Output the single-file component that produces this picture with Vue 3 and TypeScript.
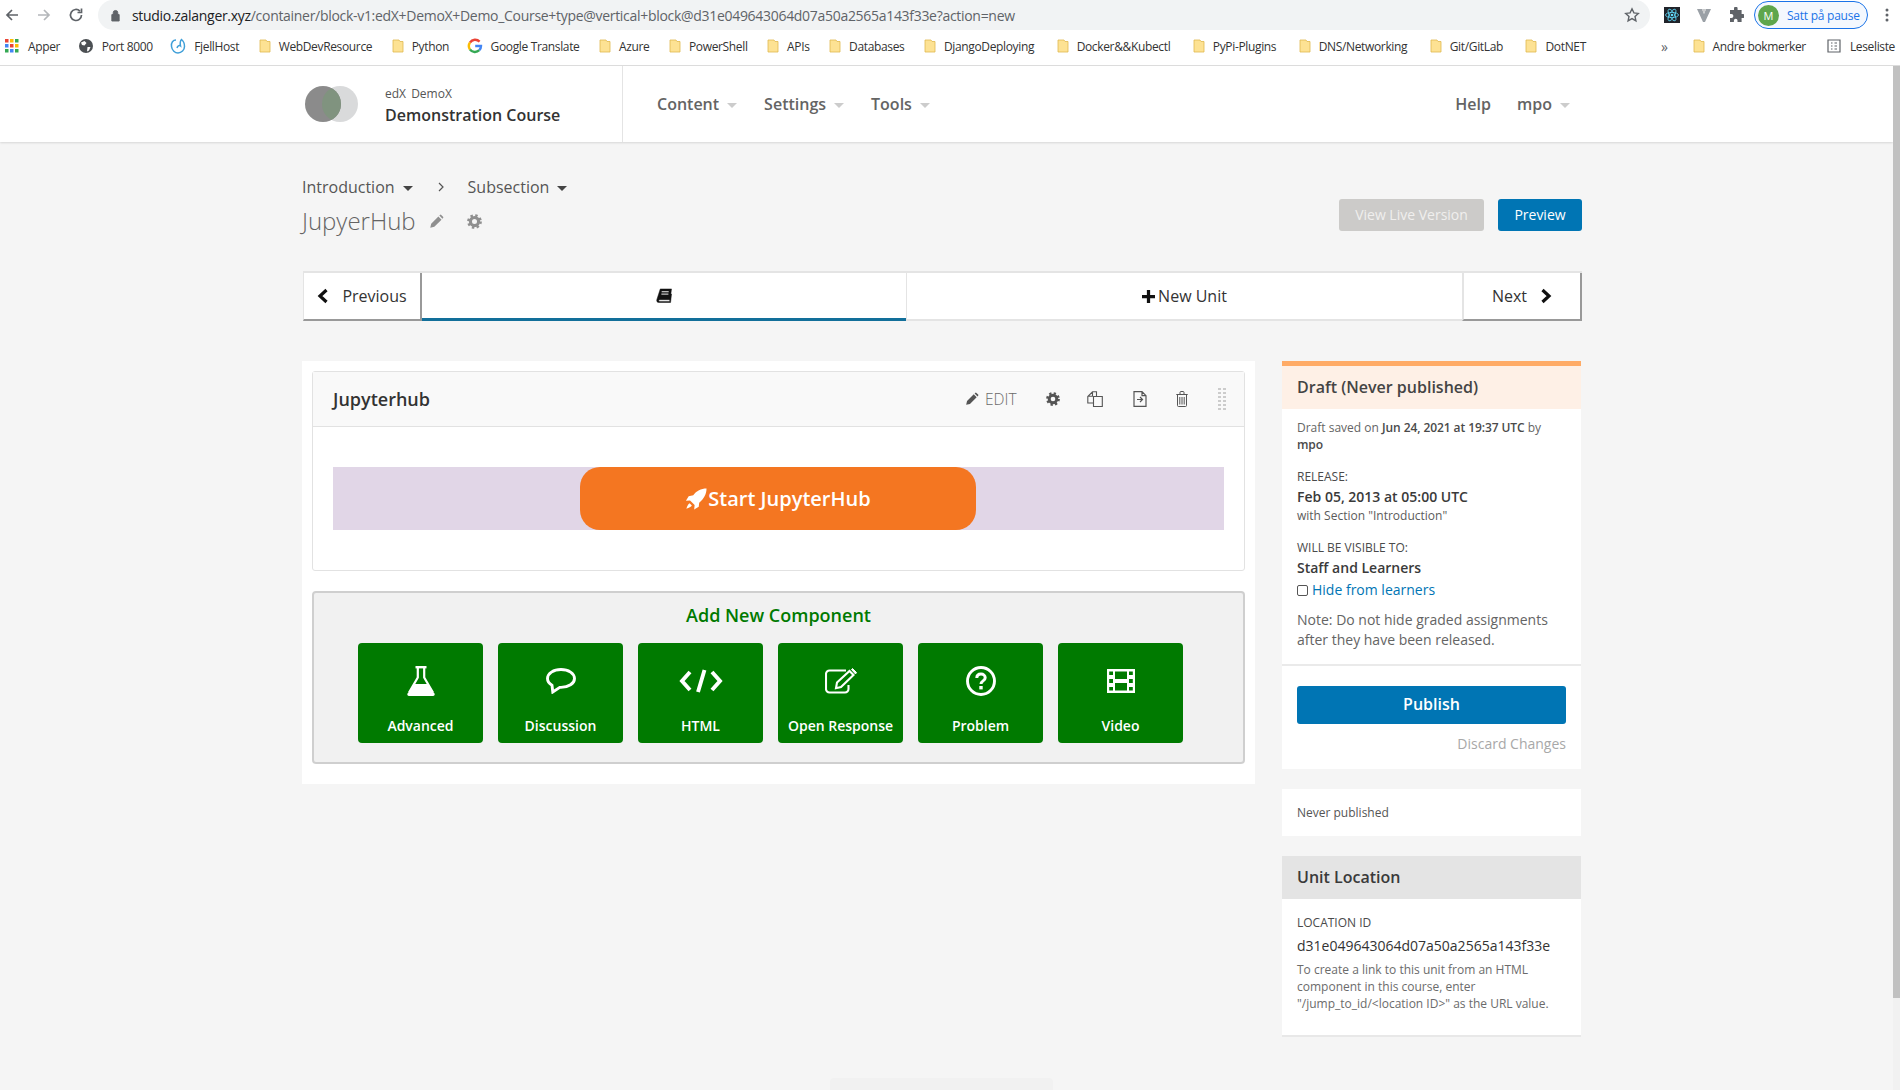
<script setup lang="ts">
interface Bookmark { label: string; icon: string }
const bookmarks: Bookmark[] = [
  { label: 'Apper', icon: 'apps' },
  { label: 'Port 8000', icon: 'globe' },
  { label: 'FjellHost', icon: 'fjell' },
  { label: 'WebDevResource', icon: 'folder' },
  { label: 'Python', icon: 'folder' },
  { label: 'Google Translate', icon: 'google' },
  { label: 'Azure', icon: 'folder' },
  { label: 'PowerShell', icon: 'folder' },
  { label: 'APIs', icon: 'folder' },
  { label: 'Databases', icon: 'folder' },
  { label: 'DjangoDeploying', icon: 'folder' },
  { label: 'Docker&&Kubectl', icon: 'folder' },
  { label: 'PyPi-Plugins', icon: 'folder' },
  { label: 'DNS/Networking', icon: 'folder' },
  { label: 'Git/GitLab', icon: 'folder' },
  { label: 'DotNET', icon: 'folder' },
]
const appDots = ['#ea4335', '#fbbc04', '#34a853', '#4285f4', '#ea4335', '#fbbc04', '#34a853', '#4285f4', '#34a853']
const pencil = 'M2 22l1.500-6.500L15 4l5 5L8.500 20.500z M16.500 2.500l1-1a1.500 1.500 0 0 1 2.100 0l2.900 2.900a1.500 1.500 0 0 1 0 2.100l-1 1z'
</script>

<template>
  <div class="page">
    <div class="viewport">
      <div class="chrome">
        <div class="omnibar">
          <svg class="nav-ic" viewBox="0 0 16 16"><path d="M14 8H3M8 3 3 8l5 5" fill="none" stroke="#5f6368" stroke-width="1.700" /></svg>
          <svg class="nav-ic" viewBox="0 0 16 16"><path d="M2 8h11M8 3l5 5-5 5" fill="none" stroke="#b4b7ba" stroke-width="1.700" /></svg>
          <svg class="nav-ic" viewBox="0 0 16 16"><path d="M13.500 8a5.500 5.500 0 1 1-1.600-3.900M13.500 1.500v4h-4" fill="none" stroke="#5f6368" stroke-width="1.700" /></svg>
          <div class="address">
            <svg class="lock" viewBox="0 0 12 14"><path d="M3.500 6V4a2.500 2.500 0 0 1 5 0v2M2 6h8v7H2z" fill="#5f6368" stroke="#5f6368" /></svg>
            <span class="url"><b>studio.zalanger.xyz</b>/container/block-v1:edX+DemoX+Demo_Course+type@vertical+block@d31e049643064d07a50a2565a143f33e?action=new</span>
            <svg class="star" viewBox="0 0 16 16"><path d="m8 1.800 1.900 4.100 4.400.5-3.300 3 .9 4.400L8 11.600l-3.900 2.200.9-4.400-3.300-3 4.400-.5z" fill="none" stroke="#5f6368" stroke-width="1.400" /></svg>
          </div>
          <div class="exts">
            <svg class="ext" viewBox="0 0 16 16">
              <rect width="16" height="16" fill="#20232a" />
              <g fill="none" stroke="#61dafb" stroke-width=".8"><ellipse cx="8" cy="8" rx="6.500" ry="2.600" /><ellipse cx="8" cy="8" rx="6.500" ry="2.600" transform="rotate(60 8 8)" /><ellipse cx="8" cy="8" rx="6.500" ry="2.600" transform="rotate(120 8 8)" /></g>
              <circle cx="8" cy="8" r="1.300" fill="#61dafb" />
            </svg>
            <svg class="ext" viewBox="0 0 16 16"><path d="M1 2h5l2 5 2-5h5L9 15H7z" fill="#9aa0a6" /><path d="M6 2h4L8 7z" fill="#c8cacc" /></svg>
            <svg class="ext" viewBox="0 0 16 16"><path d="M6 1.500a1.800 1.800 0 0 1 3.600 0V3h4v4H15a2 2 0 0 1 0 4h-1.400v4H9.500v-1.400a1.800 1.800 0 0 0-3.600 0V15H2v-4h1.400a2 2 0 0 0 0-4H2V3h4z" fill="#5f6368" /></svg>
            <div class="profile">
              <span class="avatar">M</span>
              <span class="pause">Satt på pause</span>
            </div>
            <svg class="dots" viewBox="0 0 4 16"><circle cx="2" cy="3" r="1.500" /><circle cx="2" cy="8" r="1.500" /><circle cx="2" cy="13" r="1.500" /></svg>
          </div>
        </div>
        <div class="bookmarks">
          <div v-for="b in bookmarks" :key="b.label" class="bm">
            <svg v-if="b.icon === 'apps'" class="bm-ic" viewBox="0 0 16 16">
              <rect v-for="(c, i) in appDots" :key="i" :x="1 + (i % 3) * 5" :y="1 + Math.floor(i / 3) * 5" width="3.500" height="3.500" :fill="c" />
            </svg>
            <svg v-else-if="b.icon === 'globe'" class="bm-ic" viewBox="0 0 16 16">
              <circle cx="8" cy="8" r="7" fill="#4c5054" />
              <path d="M3 4.500 6.500 3l2 2-2 2.500L4 7zM9.500 9h3l-1.500 3.500-2 1z" fill="#fff" />
            </svg>
            <svg v-else-if="b.icon === 'fjell'" class="bm-ic" viewBox="0 0 16 16">
              <path d="M6 2C3 2 1 4.500 1.500 8.500 2 12.500 5 15 8 15c3.500 0 6.500-3 6.500-6.500 0-3-1-5.500-3-7-1.500 1.500-1.500 4-1 6.500C9 7 7.500 8 7 10" fill="none" stroke="#3f9fd8" stroke-width="1.500" />
            </svg>
            <svg v-else-if="b.icon === 'google'" class="bm-ic" viewBox="0 0 16 16">
              <g fill="none" stroke-width="2.400">
                <path d="M12.600 3.700A6.200 6.200 0 0 0 3 4.500" stroke="#ea4335" />
                <path d="M3 4.500a6.200 6.200 0 0 0 0 7" stroke="#fbbc04" />
                <path d="M3 11.500a6.200 6.200 0 0 0 9.300.7" stroke="#34a853" />
                <path d="M12.300 12.200A6 6 0 0 0 14 8H8.200" stroke="#4285f4" />
              </g>
            </svg>
            <svg v-else class="bm-ic folder" viewBox="0 0 16 16">
              <path d="M3 2h6l1 1.500h3V14H3z" fill="#fde293" stroke="#e0b94f" stroke-width=".8" />
            </svg>
            <span>{{ b.label }}</span>
          </div>
          <div class="bm-right">
            <span class="more">»</span>
            <div class="bm other">
              <svg class="bm-ic folder" viewBox="0 0 16 16"><path d="M3 2h6l1 1.500h3V14H3z" fill="#fde293" stroke="#e0b94f" stroke-width=".8" /></svg>
              <span>Andre bokmerker</span>
            </div>
            <div class="bm last">
              <svg class="bm-ic" viewBox="0 0 16 16"><path d="M2 2h12v12H2zM5 5h1.500M5 8h1.500M5 11h1.500M8.500 5H11M8.500 8H11M8.500 11H11" fill="none" stroke="#5f6368" stroke-width="1.200" /></svg>
              <span>Leseliste</span>
            </div>
          </div>
        </div>
      </div>

      <div class="app-shell">
        <div class="site">
          <header class="header">
            <div class="inner header-inner">
              <div class="brand">
                <svg class="logo" viewBox="0 0 53 36">
                  <defs><clipPath id="lens"><ellipse cx="35" cy="18" rx="18" ry="18" /></clipPath></defs>
                  <ellipse cx="35" cy="18" rx="18" ry="18" fill="#d9dadb" />
                  <ellipse cx="18" cy="18" rx="18" ry="18" fill="#8b8b8b" />
                  <ellipse cx="18" cy="18" rx="18" ry="18" fill="#80937f" clip-path="url(#lens)" />
                </svg>
                <div class="course">
                  <span class="org">edX DemoX</span>
                  <span class="cname">Demonstration Course</span>
                </div>
              </div>
              <nav class="topnav">
                <span class="nav-item">Content<i class="caret"></i></span>
                <span class="nav-item">Settings<i class="caret"></i></span>
                <span class="nav-item">Tools<i class="caret"></i></span>
              </nav>
              <nav class="usernav">
                <span class="nav-item">Help</span>
                <span class="nav-item">mpo<i class="caret"></i></span>
              </nav>
            </div>
          </header>

          <div class="inner titlebar">
            <div>
              <div class="crumbs">
                <span>Introduction</span><i class="dark-caret"></i>
                <svg class="crumb-sep" viewBox="0 0 8 12"><path d="m2 2 4 4-4 4" fill="none" stroke="#555" stroke-width="1.200" /></svg>
                <span>Subsection</span><i class="dark-caret"></i>
              </div>
              <div class="unit-title">
                <h1>JupyerHub</h1>
                <svg class="t-pencil" viewBox="0 0 24 24"><path :d="pencil" fill="#8f8f8f" /></svg>
                <svg class="t-cog" viewBox="0 0 24 24">
                  <circle cx="12" cy="12" r="6.500" fill="none" stroke="#8f8f8f" stroke-width="5" />
                  <circle cx="12" cy="12" r="9.800" fill="none" stroke="#8f8f8f" stroke-width="4" stroke-dasharray="3.850 3.850" />
                </svg>
              </div>
            </div>
            <div class="actions">
              <span class="btn disabled">View Live Version</span>
              <span class="btn primary">Preview</span>
            </div>
          </div>

          <div class="inner">
            <div class="unit-nav">
              <div class="tab side prev">
                <svg class="chev" viewBox="0 0 12 16"><path d="M9.500 2 3 8l6.500 6" fill="none" stroke="#111" stroke-width="3.200" /></svg>
                <span>Previous</span>
              </div>
              <div class="tab active">
                <svg class="book" viewBox="0 0 18 16"><path d="M5 1h12l-1.500 11.500H4.500C3 12.500 3 14.500 4.500 14.500h10.500l1-8.500 1 .5-1 9H3.500C1.500 15.500 1 14 1.300 12.500z" fill="#111" stroke="#111" stroke-width=".5" /><path d="M6.500 4h7.500M6.200 6.500h7.500" stroke="#fff" /></svg>
              </div>
              <div class="tab new">
                <svg class="plus" viewBox="0 0 12 12"><path d="M6 0v12M0 6h12" stroke="#111" stroke-width="3" /></svg>
                <span>New Unit</span>
              </div>
              <div class="tab side next">
                <span>Next</span>
                <svg class="chev" viewBox="0 0 12 16"><path d="m2.500 2 6.500 6-6.500 6" fill="none" stroke="#111" stroke-width="3.200" /></svg>
              </div>
            </div>
          </div>

          <div class="inner columns">
            <main class="content">
              <section class="card">
                <div class="card-head">
                  <h2>Jupyterhub</h2>
                  <div class="tools">
                    <span class="edit">
                      <svg class="ic14" viewBox="0 0 24 24"><path :d="pencil" fill="#555" /></svg>
                      <span>EDIT</span>
                    </span>
                    <svg class="ic14 cog" viewBox="0 0 24 24">
                      <circle cx="12" cy="12" r="6.500" fill="none" stroke="#555" stroke-width="5" />
                      <circle cx="12" cy="12" r="9.800" fill="none" stroke="#555" stroke-width="4" stroke-dasharray="3.850 3.850" />
                    </svg>
                    <svg class="ic-copy" viewBox="0 0 16 16"><path d="M6.500 5.500h8.800v10H6.500zM6.500 12H.8V5.500L5.500.8h4v4.700M5.500.8v4.500H1" fill="none" stroke="#555" stroke-width="1.100" /></svg>
                    <svg class="ic-file" viewBox="0 0 16 16"><path d="M2 .7h8l4 4v10.600H2zM10 .7v4h4M5 8.500h5.500M8 6l2.500 2.500L8 11" fill="none" stroke="#555" stroke-width="1.200" /></svg>
                    <svg class="ic-trash" viewBox="0 0 12 16"><path d="M1.500 4v10.500a1 1 0 0 0 1 1h7a1 1 0 0 0 1-1V4M.3 3.500h11.400M4 3.500V1.500a1 1 0 0 1 1-1h2a1 1 0 0 1 1 1v2M3.800 6v7.500M6 6v7.500M8.200 6v7.500" fill="none" stroke="#555" stroke-width="1" /></svg>
                    <div class="drag"><i v-for="n in 12" :key="n"></i></div>
                  </div>
                </div>
                <div class="card-body">
                  <div class="jupyter-strip">
                    <div class="start-btn">
                      <svg class="rocket" viewBox="0 0 24 24"><path d="M23.500 .5c-6 0-11 2.500-14.500 7.500L4 9l-3 5 4.500-.5 5 5L10 23.500l5-3 .5-4.500C20.500 12 23.500 6.500 23.500 .5zM5 16.500c-1.500 1-2.500 3-3.500 6 3-.8 5-2 6-3.500z" fill="#fff" /></svg>
                      <span>Start JupyterHub</span>
                    </div>
                  </div>
                </div>
              </section>

              <section class="add">
                <h3>Add New Component</h3>
                <div class="add-row">
                  <div class="add-btn">
                    <div class="add-ic">
                      <svg class="i-flask" viewBox="0 0 28 30"><path d="M8.500 1.200h11" stroke="#fff" stroke-width="2.400" /><path d="M10.800 2v9.500L3 25h22l-7.800-13.500V2" fill="none" stroke="#fff" stroke-width="2.200" /><path d="M7.500 18h13l7 9.500A1.700 1.700 0 0 1 26 30H2a1.700 1.700 0 0 1-1.500-2.500z" fill="#fff" /></svg>
                    </div>
                    <span>Advanced</span>
                  </div>
                  <div class="add-btn">
                    <div class="add-ic">
                      <svg class="i-chat" viewBox="0 0 30 26"><path d="M15 1.500C7.500 1.500 1.500 5.500 1.500 10.500c0 3 2 5.300 4.500 6.800l.8 6.700 7-4.600H15c7.500 0 13.500-3.900 13.500-8.900S22.500 1.500 15 1.500z" fill="none" stroke="#fff" stroke-width="2.900" /></svg>
                    </div>
                    <span>Discussion</span>
                  </div>
                  <div class="add-btn">
                    <div class="add-ic">
                      <svg class="i-code" viewBox="0 0 44 24"><path d="M11 3 3 12l8 9M33 3l8 9-8 9M25.500 1l-6.500 22" fill="none" stroke="#fff" stroke-width="3.900" /></svg>
                    </div>
                    <span>HTML</span>
                  </div>
                  <div class="add-btn">
                    <div class="add-ic">
                      <svg class="i-edit" viewBox="0 0 32 26"><path d="M21 2.500H4.500A3.500 3.500 0 0 0 1 6v15a3.500 3.500 0 0 0 3.500 3.500H20a3.500 3.500 0 0 0 3.500-3.500v-4" fill="none" stroke="#fff" stroke-width="2.100" /><path d="M12 14.500 24.500 3l4 4L16 19l-5 1.200z" fill="none" stroke="#fff" stroke-width="2.100" /><path d="m26.500 1.500 1-1 4 4-1 1.500z" fill="#fff" stroke="#fff" /></svg>
                    </div>
                    <span>Open Response</span>
                  </div>
                  <div class="add-btn">
                    <div class="add-ic">
                      <svg class="i-prob" viewBox="0 0 30 30"><circle cx="15" cy="15" r="13.500" fill="none" stroke="#fff" stroke-width="2.900" /><path d="M10.800 12c0-2.500 1.800-4 4.200-4s4.200 1.500 4.200 3.700c0 3.300-4.200 3-4.200 6.300" fill="none" stroke="#fff" stroke-width="3" /><rect x="13.300" y="20" width="3.400" height="3.400" fill="#fff" /></svg>
                    </div>
                    <span>Problem</span>
                  </div>
                  <div class="add-btn">
                    <div class="add-ic">
                      <svg class="i-video" viewBox="0 0 28 24">
                        <rect width="28" height="24" fill="#fff" />
                        <g fill="#007a00">
                          <rect x="8" y="2.500" width="12" height="7.500" /><rect x="8" y="14" width="12" height="7.500" />
                          <rect x="2.200" y="2.500" width="3.800" height="3.500" /><rect x="2.200" y="10" width="3.800" height="4" /><rect x="2.200" y="18" width="3.800" height="3.500" />
                          <rect x="22" y="2.500" width="3.800" height="3.500" /><rect x="22" y="10" width="3.800" height="4" /><rect x="22" y="18" width="3.800" height="3.500" />
                        </g>
                      </svg>
                    </div>
                    <span>Video</span>
                  </div>
                </div>
              </section>
            </main>

            <aside class="sidebar">
              <section class="panel status">
                <h4 class="draft-head"><span>Draft (Never published)</span></h4>
                <div class="status-body">
                  <p class="saved">Draft saved on <em>Jun 24, 2021 at 19:37 UTC</em> by<br /><em class="who">mpo</em></p>
                  <p class="label rel">RELEASE:</p>
                  <p class="value">Feb 05, 2013 at 05:00 UTC</p>
                  <p class="small">with Section "Introduction"</p>
                  <p class="label vis">WILL BE VISIBLE TO:</p>
                  <p class="value">Staff and Learners</p>
                  <p class="hide"><i class="check"></i><span>Hide from learners</span></p>
                  <p class="note">Note: Do not hide graded assignments after they have been released.</p>
                </div>
                <div class="publish-area">
                  <div class="publish">Publish</div>
                  <div class="discard">Discard Changes</div>
                </div>
              </section>

              <section class="panel never">Never published</section>

              <section class="panel location">
                <h4 class="loc-head">Unit Location</h4>
                <div class="loc-body">
                  <p class="loc-label">LOCATION ID</p>
                  <p class="loc-id">d31e049643064d07a50a2565a143f33e</p>
                  <p class="loc-desc">To create a link to this unit from an HTML component in this course, enter "/jump_to_id/&lt;location ID&gt;" as the URL value.</p>
                </div>
              </section>
            </aside>
          </div>

          <div class="footer-tab"></div>
        </div>
        <div class="scrollbar"><div class="thumb"></div></div>
      </div>
    </div>
  </div>
</template>

<style>
html, body { margin: 0; background: #f5f5f5; }
</style>

<style scoped>
* { box-sizing: border-box; }
p, h1, h2, h3, h4 { margin: 0; font-weight: inherit; font-size: inherit; }
em { font-style: normal; }
i { font-style: normal; display: block; }
svg { display: block; flex: none; }

.page { width: 1900px; height: 1090px; overflow: hidden; background: #f5f5f5; font-family: "Open Sans", "Noto Sans", sans-serif; color: #333; }
.viewport { display: flex; flex-direction: column; height: 100%; }

.chrome { height: 66px; background: #fff; border-bottom: 1px solid #dcdcdc; flex: none; }
.omnibar { height: 32px; display: flex; align-items: flex-start; padding-left: 0; }
.nav-ic { width: 16px; height: 16px; margin: 7px 8px 0 4px; }
.nav-ic + .nav-ic { margin-left: 8px; }
.nav-ic + .nav-ic + .nav-ic { margin-left: 8px; }
.address { width: 1552px; height: 30px; background: #f1f3f4; border-radius: 15px; margin-left: 6px; display: flex; align-items: center; padding: 0 10px 0 12px; }
.lock { width: 11px; height: 13px; margin-right: 11px; }
.url { font-size: 14px; color: #5f6368; letter-spacing: -.3px; white-space: nowrap; flex: 1; }
.url b { font-weight: 400; color: #202124; }
.star { width: 16px; height: 16px; }
.exts { display: flex; align-items: center; height: 30px; flex: 1; padding-left: 14px; }
.ext { width: 16px; height: 16px; margin-right: 16px; }
.profile { width: 114px; height: 28px; margin-left: -6px; border: 1.500px solid #1a73e8; border-radius: 14px; display: flex; align-items: center; padding-left: 3px; background: #f4f8fe; }
.avatar { width: 21px; height: 21px; border-radius: 50%; background: #5fa64c; color: #fff; font-size: 11px; display: flex; align-items: center; justify-content: center; }
.pause { font-size: 12px; color: #1a73e8; margin-left: 8px; letter-spacing: -.25px; white-space: nowrap; }
.dots { width: 4px; height: 16px; margin-left: 17px; fill: #5f6368; }

.bookmarks { height: 28px; display: flex; align-items: center; padding: 0 5px 0 4px; font-size: 12px; color: #333; letter-spacing: -.35px; white-space: nowrap; }
.bm { display: flex; align-items: center; margin-right: 17.500px; }
.bm:nth-child(n+11) { margin-right: 20.500px; }
.bm-ic { width: 16px; height: 16px; margin-right: 8px; }
.folder { margin-right: 6px; }
.bm-right { margin-left: auto; display: flex; align-items: center; }
.more { margin-right: 23px; color: #5f6368; font-size: 14px; }
.bm-right .bm { margin-right: 20px; }
.bm-right .bm.last { margin-right: 0; }

.app-shell { flex: 1; display: flex; min-height: 0; }
.site { flex: 1; min-width: 0; overflow: hidden; display: flex; flex-direction: column; }
.scrollbar { width: 7px; background: #f1f1f1; flex: none; }
.thumb { height: 932px; background: #c1c1c1; }

.inner { width: 1280px; margin-left: 302px; }
.header { height: 76px; background: #fff; box-shadow: 0 1px 2px rgba(0, 0, 0, .12); flex: none; }
.header-inner { height: 100%; display: flex; align-items: stretch; }
.brand { width: 321px; display: flex; align-items: center; border-right: 1px solid #e4e4e4; padding-left: 3px; }
.logo { width: 53px; height: 36px; margin-right: 27px; }
.course { display: flex; flex-direction: column; margin-top: 4px; }
.org { font-size: 12px; line-height: 16px; color: #555; word-spacing: 2px; }
.cname { font-size: 16px; line-height: 24px; font-weight: 600; color: #333; margin-top: 1px; }
.topnav { display: flex; align-items: center; padding-left: 34px; gap: 27px; flex: 1; }
.usernav { display: flex; align-items: center; gap: 26px; padding-right: 12px; }
.nav-item { display: flex; align-items: center; font-size: 16px; font-weight: 600; color: #646464; }
.caret { width: 0; height: 0; margin-left: 8px; margin-top: 3px; border: 5px solid transparent; border-top-color: #ccc; border-bottom: 0; }

.titlebar { display: flex; justify-content: space-between; align-items: flex-start; height: 107px; padding-top: 33px; flex: none; }
.crumbs { display: flex; align-items: center; height: 24px; font-size: 16px; color: #555; }
.dark-caret { width: 0; height: 0; margin: 3px 0 0 8px; border: 5px solid transparent; border-top-color: #444; border-bottom: 0; }
.crumb-sep { width: 8px; height: 12px; margin: 0 23px 0 24px; }
.unit-title { display: flex; align-items: center; margin-top: 4px; height: 36px; }
.unit-title h1 { font-size: 24px; font-weight: 300; color: #646464; line-height: 36px; }
.t-pencil { width: 15px; height: 15px; margin: 0 0 0 13px; }
.t-cog { width: 15px; height: 15px; margin: 0 0 0 23px; }
.actions { display: flex; gap: 14px; margin-top: 24px; }
.btn { height: 32px; border-radius: 3px; font-size: 14px; padding-bottom: 1px; display: flex; align-items: center; justify-content: center; }
.disabled { width: 145px; background: #cccbc9; color: #f0efee; }
.primary { width: 84px; background: #0075b4; color: #fff; font-weight: 400; }

.unit-nav { display: flex; height: 50px; margin-top: 22px; background: #fff; border-top: 2px solid #e4e4e4; border-bottom: 2px solid #e4e4e4; font-size: 16px; color: #333; margin-left: 1px; width: 1279px; }
.tab { display: flex; align-items: center; justify-content: center; margin-bottom: -2px; }
.side { width: 120px; gap: 13px; background: #fff; border-bottom: 2px solid #999; }
.prev { border-right: 2px solid #999; border-left: 1px solid #e4e4e4; width: 119px; }
.next { border-right: 2px solid #999; border-left: 2px solid #e4e4e4; }
.chev { width: 12px; height: 16px; }
.active { width: 484px; border-bottom: 3px solid #126f9a; }
.new { width: 556px; gap: 3px; border-left: 1px solid #e4e4e4; margin-bottom: 0; }
.book { width: 18px; height: 15px; }
.plus { width: 13px; height: 13px; }

.columns { display: flex; gap: 27px; align-items: flex-start; margin-top: 40px; }
.content { width: 953px; height: 423px; background: #fff; padding: 10px 10px 20px; flex: none; }
.card { border: 1px solid #e2e2e2; border-radius: 3px; height: 200px; }
.card-head { height: 55px; background: #f9f9f9; border-bottom: 1px solid #e2e2e2; display: flex; align-items: center; justify-content: space-between; padding: 0 18px 0 20px; }
.card-head h2 { font-size: 18px; font-weight: 600; color: #333; }
.tools { display: flex; align-items: center; }
.edit { display: flex; align-items: center; gap: 6px; font-size: 15.500px; font-weight: 300; color: #6a6a6a; width: 52px; white-space: nowrap; }
.ic14 { width: 14px; height: 14px; }
.cog { margin-left: 29px; }
.ic-copy { width: 16px; height: 16px; margin-left: 27px; }
.ic-file { width: 16px; height: 16px; margin-left: 29px; }
.ic-trash { width: 12px; height: 16px; margin-left: 28px; }
.drag { display: grid; grid-template-columns: 3px 3px; column-gap: 2px; row-gap: 2px; margin-left: 30px; }
.drag i { width: 3px; height: 2px; background: #ccc; }
.card-body { padding: 40px 20px 0; }
.jupyter-strip { height: 63px; background: #e1d6e7; display: flex; justify-content: center; }
.start-btn { width: 396px; height: 63px; margin-left: -1px; background: #f47621; border-radius: 20px; color: #fff; font-size: 20px; font-weight: 600; display: flex; align-items: center; justify-content: center; gap: 1px; }
.rocket { width: 22px; height: 22px; }

.add { margin-top: 20px; height: 173px; background: #f1f1f1; border: 2px solid #cfcfcf; border-radius: 4px; padding-left: 44px; }
.add h3 { font-size: 18px; font-weight: 600; color: #007a00; line-height: 24px; text-align: center; margin: 10px 0 0 -44px; }
.add-row { display: flex; gap: 15px; margin-top: 16px; }
.add-btn { width: 125px; height: 100px; background: #007a00; border-radius: 4px; color: #fff; font-size: 14px; font-weight: 600; display: flex; flex-direction: column; align-items: center; padding-top: 23px; }
.add-ic { height: 30px; display: flex; align-items: center; justify-content: center; margin-bottom: 20px; }
.add-btn span { line-height: 20px; white-space: nowrap; }
.i-flask { width: 28px; height: 30px; }
.i-chat { width: 30px; height: 26px; }
.i-code { width: 44px; height: 24px; }
.i-edit { width: 32px; height: 26px; }
.i-prob { width: 30px; height: 30px; }
.i-video { width: 28px; height: 24px; }

.sidebar { width: 299px; display: flex; flex-direction: column; gap: 20px; flex: none; }
.panel { background: #fff; }
.draft-head { height: 48px; background: #fef0e6; border-top: 5px solid #ffab66; padding: 0 15px 2px; display: flex; align-items: center; font-size: 16px; font-weight: 600; color: #444; }
.status-body { padding: 10px 15px 0; height: 257px; border-bottom: 2px solid #eaeaea; color: #646464; }
.saved { font-size: 12px; line-height: 17px; }
.saved em { color: #4a4a4a; font-weight: 600; letter-spacing: -.08px; }
.label { font-size: 12px; line-height: 17px; color: #4a4a4a; }
.rel { margin-top: 15px; }
.vis { margin-top: 15px; }
.value { font-size: 14px; font-weight: 600; line-height: 20px; color: #3a3a3a; margin-top: 2px; }
.small { font-size: 12px; line-height: 17px; color: #5b5b5b; margin-top: 0; }
.hide { display: flex; align-items: center; font-size: 14px; line-height: 20px; color: #0075b4; margin-top: 2px; }
.check { width: 11px; height: 11px; border: 1px solid #555; border-radius: 2px; margin-right: 4px; }
.note { font-size: 14px; line-height: 20px; color: #646464; margin-top: 10px; }
.publish-area { padding: 20px 15px 0; height: 103px; }
.publish { height: 38px; background: #0075b4; border-radius: 3px; color: #fff; font-size: 16px; font-weight: 600; padding-bottom: 3px; display: flex; align-items: center; justify-content: center; }
.discard { font-size: 14px; color: #a8a8a8; text-align: right; line-height: 20px; margin-top: 10px; }
.never { height: 47px; padding: 0 15px; display: flex; align-items: center; font-size: 12px; color: #555; }
.loc-head { height: 43px; background: #e4e4e4; padding: 0 15px 1px; display: flex; align-items: center; font-size: 16px; font-weight: 600; color: #3a3a3a; }
.loc-body { padding: 15px 15px 0; height: 138px; border-bottom: 2px solid #e8e8e8; }
.loc-label { font-size: 12px; font-weight: 500; line-height: 17px; color: #4a4a4a; }
.loc-id { font-size: 14px; font-weight: 500; line-height: 20px; color: #333; margin-top: 5px; white-space: nowrap; }
.loc-desc { font-size: 12px; line-height: 17px; color: #6b6b6b; margin-top: 5px; }
.footer-tab { width: 223px; height: 20px; background: #f1f1f1; border-radius: 4px 4px 0 0; margin: 41px 0 0 830px; flex: none; }
</style>
